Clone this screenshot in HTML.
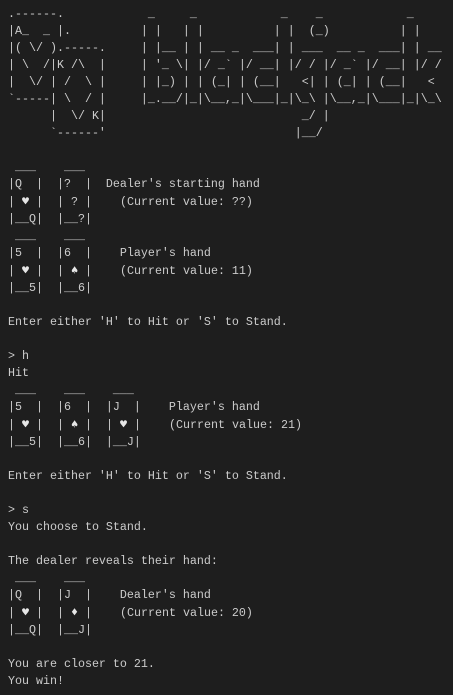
<!DOCTYPE html>
<html><head><meta charset="utf-8"><style>
html,body{margin:0;padding:0;background:#1e1e1e;width:453px;height:695px;overflow:hidden}
pre{margin:0;padding:6px 0 0 8px;font-family:"Liberation Mono","DejaVu Sans Mono",monospace;font-size:11.67px;line-height:17px;color:#cccccc;white-space:pre}
.s{font-family:"DejaVu Sans Mono",monospace;color:#e6e6e6}
</style></head><body><pre>.------.            _     _            _    _            _    
|A_  _ |.          | |   | |          | |  (_)          | |   
|( \/ ).-----.     | |__ | | __ _  ___| | ___  __ _  ___| | __
| \  /|K /\  |     | '_ \| |/ _` |/ __| |/ / |/ _` |/ __| |/ /
|  \/ | /  \ |     | |_) | | (_| | (__|   &lt;| | (_| | (__|   &lt; 
`-----| \  / |     |_.__/|_|\__,_|\___|_|\_\ |\__,_|\___|_|\_\
      |  \/ K|                            _/ |                
      `------'                           |__/                 

 ___    ___
|Q  |  |?  |  Dealer's starting hand
| <span class="s">♥</span> |  | ? |    (Current value: ??)
|__Q|  |__?|
 ___    ___
|5  |  |6  |    Player's hand
| <span class="s">♥</span> |  | <span class="s">♠</span> |    (Current value: 11)
|__5|  |__6|

Enter either 'H' to Hit or 'S' to Stand.

&gt; h
Hit
 ___    ___    ___
|5  |  |6  |  |J  |    Player's hand
| <span class="s">♥</span> |  | <span class="s">♠</span> |  | <span class="s">♥</span> |    (Current value: 21)
|__5|  |__6|  |__J|

Enter either 'H' to Hit or 'S' to Stand.

&gt; s
You choose to Stand.

The dealer reveals their hand:
 ___    ___
|Q  |  |J  |    Dealer's hand
| <span class="s">♥</span> |  | <span class="s">♦</span> |    (Current value: 20)
|__Q|  |__J|

You are closer to 21.
You win!</pre></body></html>
